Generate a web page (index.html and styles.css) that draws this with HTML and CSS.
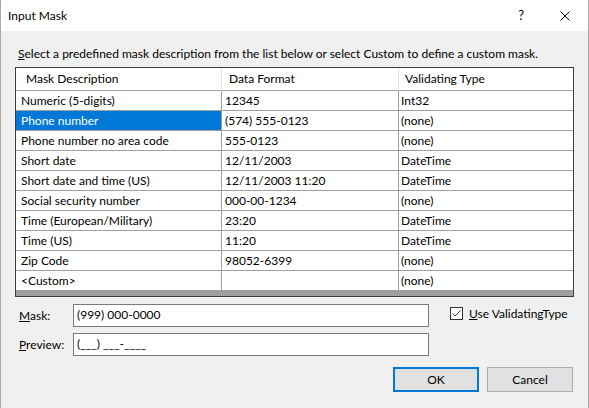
FILE: index.html
```html
<!DOCTYPE html>
<html>
<head>
<meta charset="utf-8">
<link rel="stylesheet" href="styles.css">
</head>
<body>
<div class="window">
  <div class="titlebar">
    <span class="title">Input Mask</span>
    <span class="help">?</span>
    <svg class="close" width="10" height="10" viewBox="0 0 10 10"><path d="M0.5 0.5 L9.5 9.5 M9.5 0.5 L0.5 9.5" stroke="#000" stroke-width="1" fill="none"/></svg>
  </div>
  <div class="body">
    <p class="intro"><u>S</u>elect a predefined mask description from the list below or select Custom to define a custom mask.</p>
    <div class="grid">
      <div class="hcell c1">Mask Description</div><div class="hcell c2">Data Format</div><div class="hcell c3">Validating Type</div>
      <div class="cell">Numeric (5-digits)</div><div class="cell">12345</div><div class="cell last">Int32</div>
      <div class="cell sel">Phone number</div><div class="cell">(574) 555-0123</div><div class="cell last">(none)</div>
      <div class="cell">Phone number no area code</div><div class="cell">555-0123</div><div class="cell last">(none)</div>
      <div class="cell">Short date</div><div class="cell">12/11/2003</div><div class="cell last">DateTime</div>
      <div class="cell">Short date and time (US)</div><div class="cell">12/11/2003 11:20</div><div class="cell last">DateTime</div>
      <div class="cell">Social security number</div><div class="cell">000-00-1234</div><div class="cell last">(none)</div>
      <div class="cell">Time (European/Military)</div><div class="cell">23:20</div><div class="cell last">DateTime</div>
      <div class="cell">Time (US)</div><div class="cell">11:20</div><div class="cell last">DateTime</div>
      <div class="cell">Zip Code</div><div class="cell">98052-6399</div><div class="cell last">(none)</div>
      <div class="cell">&lt;Custom&gt;</div><div class="cell"></div><div class="cell last">(none)</div>
      <div class="filler"></div>
    </div>
    <div class="fields">
      <div class="frow">
        <span class="flabel"><u>M</u>ask:</span>
        <div class="input">(999) 000-0000</div>
        <label class="check"><span class="box"><svg width="11" height="11" viewBox="0 0 11 11"><path d="M1.5 5.5 L4 8 L9.5 2.5" stroke="#333" stroke-width="1" fill="none"/></svg></span><span><u>U</u>se ValidatingType</span></label>
      </div>
      <div class="frow">
        <span class="flabel"><u>P</u>review:</span>
        <div class="input">(___) ___-____</div>
      </div>
    </div>
    <div class="buttons">
      <div class="btn ok">OK</div>
      <div class="btn">Cancel</div>
    </div>
  </div>
</div>
</body>
</html>
```
FILE: styles.css
```css
* { box-sizing: border-box; }
html, body { margin: 0; padding: 0; }
body {
  width: 589px;
  height: 408px;
  overflow: hidden;
  font-family: Lato, "Noto Sans", sans-serif;
  font-size: 12px;
  color: #000;
  background: #f0f0f0;
}
.window {
  width: 589px;
  height: 408px;
  border-left: 1px solid #a8a8a8;
  border-right: 1px solid #a8a8a8;
  display: flex;
  flex-direction: column;
}
.titlebar {
  height: 31px;
  background: #fff;
  display: flex;
  align-items: center;
  padding-left: 7px;
}
.title { flex: 1; margin-top: -1px; }
.help { margin-right: 36px; font-size: 13px; margin-top: -1px; }
.close { margin-right: 18px; }
.body {
  flex: 1;
  padding: 0 14px 0 14px;
  display: flex;
  flex-direction: column;
}
.intro {
  margin: 14px 0 0 3px;
  height: 17px;
  line-height: 17px;
  white-space: nowrap;
}
.grid {
  margin-top: 5px;
  width: 559px;
  border: 1px solid #404040;
  display: grid;
  grid-template-columns: 206px 177px 174px;
  grid-template-rows: 23px repeat(10, 20px) 5px;
  background: #fff;
}
.hcell {
  border-right: 1px solid #e5e5e5;
  border-bottom: 1px solid #a0a0a0;
  padding-left: 7px;
  line-height: 21px;
  white-space: nowrap;
}
.hcell.c1 { padding-left: 10px; }
.hcell.c3 { border-right: none; padding-left: 6px; }
.cell {
  border-right: 1px solid #a0a0a0;
  border-bottom: 1px solid #a0a0a0;
  padding-left: 3px;
  line-height: 19px;
  white-space: nowrap;
  overflow: hidden;
}
.cell:nth-child(3n+1) { padding-left: 5px; }
.cell.last { border-right: none; padding-left: 2px; }
.cell.sel { background: #0078d7; color: #fff; }
.filler {
  grid-column: 1 / 4;
  height: 5px;
  background: #a0a0a0;
}
.fields {
  margin-top: 7px;
  display: flex;
  flex-direction: column;
  gap: 6px;
}
.frow {
  display: flex;
  align-items: center;
  height: 23px;
}
.flabel { width: 58px; padding-left: 4px; white-space: nowrap; }
.input {
  width: 356px;
  height: 23px;
  border: 1px solid #7a7a7a;
  background: #fff;
  padding-left: 3px;
  line-height: 20px;
  white-space: nowrap;
}
.check {
  margin-left: 21px;
  display: flex;
  align-items: center;
  gap: 6px;
  margin-top: -5px;
  white-space: nowrap;
}
.box {
  width: 13px;
  height: 13px;
  border: 1px solid #333;
  background: #fff;
  display: flex;
  align-items: center;
  justify-content: center;
}
.buttons {
  margin-top: 11px;
  display: flex;
  justify-content: flex-end;
  gap: 8px;
  width: 558px;
}
.btn {
  width: 86px;
  height: 25px;
  border: 1px solid #adadad;
  background: #e1e1e1;
  display: flex;
  align-items: center;
  justify-content: center;
}
.btn.ok { border: 2px solid #0078d7; }
```
